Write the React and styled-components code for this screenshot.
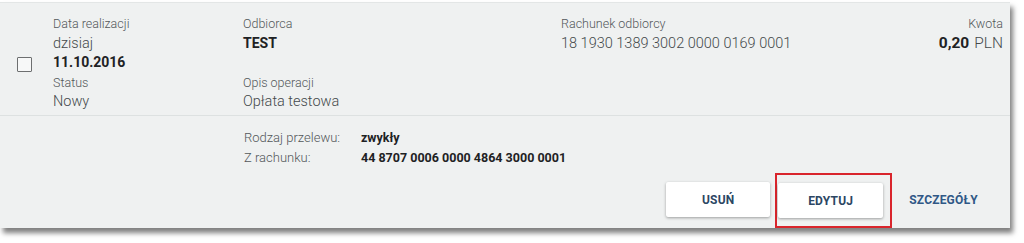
import React from 'react';
import styled, { createGlobalStyle } from 'styled-components';

const GlobalStyle = createGlobalStyle`
  html, body {
    margin: 0;
    padding: 0;
    background: #ffffff;
    font-family: Roboto, "Liberation Sans", Arial, sans-serif;
  }
`;

const Page = styled.div`
  width: 1024px;
  height: 243px;
  padding: 2px 14px 0 0;
  box-sizing: border-box;
`;

const Panel = styled.div`
  background: #eff1f1;
  border-top: 1px solid #e3e6e6;
  box-shadow: 3px 5px 5px rgba(0, 0, 0, 0.5);
  height: 225px;
  display: flex;
  flex-direction: column;
`;

const Summary = styled.div`
  display: grid;
  grid-template-columns: 53px 190px 318px 1fr auto;
  padding: 11px 7px 0 0;
  height: 113px;
  box-sizing: border-box;
  border-bottom: 1px solid #dde1e1;
`;

const CheckCell = styled.div`
  display: flex;
  align-items: center;
  padding-left: 17px;
`;

const Checkbox = styled.span`
  width: 13px;
  height: 13px;
  border: 1.5px solid #6d6f70;
  border-radius: 1px;
  background: #f7f8f8;
`;

const Column = styled.div`
  display: flex;
  flex-direction: column;
  align-items: ${(p) => (p.$right ? 'flex-end' : 'flex-start')};
`;

const Label = styled.div`
  font-size: 12.5px;
  line-height: 19.5px;
  color: #53585a;
  font-weight: 300;
`;

const Value = styled.div`
  font-size: ${(p) => p.$size || (p.$bold ? 14 : 14.5)}px;
  line-height: 19.5px;
  color: ${(p) => (p.$bold ? '#1e2224' : '#44494b')};
  font-weight: ${(p) => (p.$bold ? 700 : 300)};
  white-space: nowrap;
`;

const Spacer = styled.div`
  height: 19.5px;
`;

const Amount = styled.span`
  font-weight: 700;
  color: #1e2224;
  margin-right: 5px;
`;

const Details = styled.div`
  flex: 1;
  display: flex;
  flex-direction: column;
  padding: 12px 0 0 244px;
`;

const InfoRow = styled.div`
  display: grid;
  grid-template-columns: 117px auto;
  line-height: 20px;
`;

const InfoLabel = styled.span`
  font-size: 13px;
  color: #53585a;
  font-weight: 300;
`;

const InfoValue = styled.span`
  font-size: 12.5px;
  color: #1e2224;
  font-weight: 700;
`;

const Actions = styled.div`
  display: flex;
  justify-content: flex-end;
  align-items: flex-start;
  margin-top: 5px;
  padding-right: 32px;
`;

const Button = styled.button`
  width: ${(p) => p.$width || 104}px;
  height: 35px;
  background: #ffffff;
  border: none;
  border-radius: 2px;
  box-shadow: 0 1px 3px rgba(0, 0, 0, 0.35);
  font-family: Roboto, "Liberation Sans", Arial, sans-serif;
  font-size: 12px;
  font-weight: 700;
  color: #2c4663;
  letter-spacing: 0.2px;
  cursor: pointer;
  margin-top: 9px;
`;

const Highlight = styled.div`
  border: 2px solid #d9252c;
  padding: 8px 7px 8px 1px;
  margin-left: 5px;
  display: flex;
`;

const HighlightedButton = styled(Button)`
  margin-top: 0;
`;

const TextButton = styled.button`
  background: none;
  border: none;
  padding: 0;
  margin: 9px 0 0 17px;
  height: 35px;
  font-family: Roboto, "Liberation Sans", Arial, sans-serif;
  font-size: 12px;
  font-weight: 700;
  color: #2f5886;
  letter-spacing: 0.2px;
  cursor: pointer;
`;

export default function App() {
  return (
    <>
      <GlobalStyle />
      <Page>
        <Panel>
          <Summary>
            <CheckCell>
              <Checkbox />
            </CheckCell>
            <Column>
              <Label>Data realizacji</Label>
              <Value>dzisiaj</Value>
              <Value $bold>11.10.2016</Value>
              <Label>Status</Label>
              <Value>Nowy</Value>
            </Column>
            <Column>
              <Label>Odbiorca</Label>
              <Value $bold>TEST</Value>
              <Spacer />
              <Label>Opis operacji</Label>
              <Value>Opłata testowa</Value>
            </Column>
            <Column>
              <Label>Rachunek odbiorcy</Label>
              <Value>18 1930 1389 3002 0000 0169 0001</Value>
            </Column>
            <Column $right>
              <Label>Kwota</Label>
              <Value $size={15.5}>
                <Amount>0,20</Amount>PLN
              </Value>
            </Column>
          </Summary>
          <Details>
            <InfoRow>
              <InfoLabel>Rodzaj przelewu:</InfoLabel>
              <InfoValue>zwykły</InfoValue>
            </InfoRow>
            <InfoRow>
              <InfoLabel>Z rachunku:</InfoLabel>
              <InfoValue>44 8707 0006 0000 4864 3000 0001</InfoValue>
            </InfoRow>
            <Actions>
              <Button>USUŃ</Button>
              <Highlight>
                <HighlightedButton $width={105}>EDYTUJ</HighlightedButton>
              </Highlight>
              <TextButton>SZCZEGÓŁY</TextButton>
            </Actions>
          </Details>
        </Panel>
      </Page>
    </>
  );
}
